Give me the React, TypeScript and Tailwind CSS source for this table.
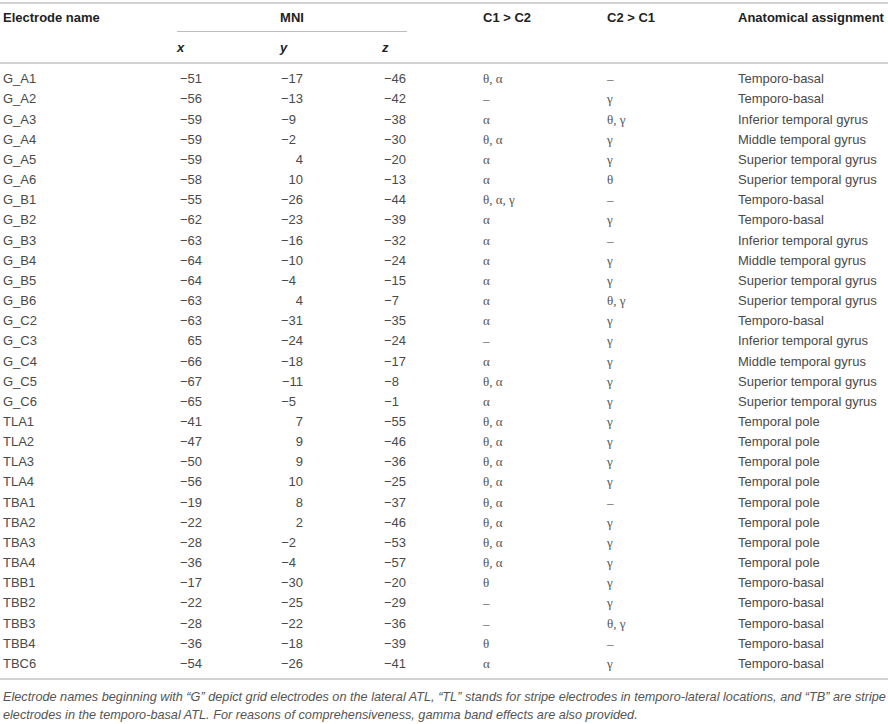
const rows: [string, number, number, number, string, string, string][] = [
  ['G_A1', -51, -17, -46, 'θ, α', '–', 'Temporo-basal'],
  ['G_A2', -56, -13, -42, '–', 'γ', 'Temporo-basal'],
  ['G_A3', -59, -9, -38, 'α', 'θ, γ', 'Inferior temporal gyrus'],
  ['G_A4', -59, -2, -30, 'θ, α', 'γ', 'Middle temporal gyrus'],
  ['G_A5', -59, 4, -20, 'α', 'γ', 'Superior temporal gyrus'],
  ['G_A6', -58, 10, -13, 'α', 'θ', 'Superior temporal gyrus'],
  ['G_B1', -55, -26, -44, 'θ, α, γ', '–', 'Temporo-basal'],
  ['G_B2', -62, -23, -39, 'α', 'γ', 'Temporo-basal'],
  ['G_B3', -63, -16, -32, 'α', '–', 'Inferior temporal gyrus'],
  ['G_B4', -64, -10, -24, 'α', 'γ', 'Middle temporal gyrus'],
  ['G_B5', -64, -4, -15, 'α', 'γ', 'Superior temporal gyrus'],
  ['G_B6', -63, 4, -7, 'α', 'θ, γ', 'Superior temporal gyrus'],
  ['G_C2', -63, -31, -35, 'α', 'γ', 'Temporo-basal'],
  ['G_C3', 65, -24, -24, '–', 'γ', 'Inferior temporal gyrus'],
  ['G_C4', -66, -18, -17, 'α', 'γ', 'Middle temporal gyrus'],
  ['G_C5', -67, -11, -8, 'θ, α', 'γ', 'Superior temporal gyrus'],
  ['G_C6', -65, -5, -1, 'α', 'γ', 'Superior temporal gyrus'],
  ['TLA1', -41, 7, -55, 'θ, α', 'γ', 'Temporal pole'],
  ['TLA2', -47, 9, -46, 'θ, α', 'γ', 'Temporal pole'],
  ['TLA3', -50, 9, -36, 'θ, α', 'γ', 'Temporal pole'],
  ['TLA4', -56, 10, -25, 'θ, α', 'γ', 'Temporal pole'],
  ['TBA1', -19, 8, -37, 'θ, α', '–', 'Temporal pole'],
  ['TBA2', -22, 2, -46, 'θ, α', 'γ', 'Temporal pole'],
  ['TBA3', -28, -2, -53, 'θ, α', 'γ', 'Temporal pole'],
  ['TBA4', -36, -4, -57, 'θ, α', 'γ', 'Temporal pole'],
  ['TBB1', -17, -30, -20, 'θ', 'γ', 'Temporo-basal'],
  ['TBB2', -22, -25, -29, '–', 'γ', 'Temporo-basal'],
  ['TBB3', -28, -22, -36, '–', 'θ, γ', 'Temporo-basal'],
  ['TBB4', -36, -18, -39, 'θ', '–', 'Temporo-basal'],
  ['TBC6', -54, -26, -41, 'α', 'γ', 'Temporo-basal'],
];

const cols = 'grid grid-cols-[174px_103px_102px_101px_124px_131px_1fr]';

function Num({ v, w }: { v: number; w: string }) {
  // single-digit negatives line up with the minus of two-digit ones
  const pad = v < 0 && v > -10 ? 'pr-[7px]' : '';
  return (
    <span className={`${w} ${pad} block text-right`}>
      {v < 0 ? `\u2212${-v}` : v}
    </span>
  );
}

function Greek({ s }: { s: string }) {
  return <span className="font-['Liberation_Serif',serif] text-[13px] text-[#555]">{s}</span>;
}

export default function App() {
  return (
    <div className="w-[888px] h-[724px] bg-white font-['Liberation_Sans',Arial,sans-serif] text-[13px] text-[#4a4a4a] overflow-hidden">
      <div className="mt-[2px] border-t-2 border-[#d2d2d2]" />

      <div className={`${cols} pl-[3px] font-bold text-[#222]`}>
        <div className="h-[28px] flex items-center">Electrode name</div>
        <div className="col-span-3 w-[230px] h-[28px] flex items-center justify-center border-b border-[#bdbdbd]">
          MNI
        </div>
        <div className="h-[28px] flex items-center">C1 &gt; C2</div>
        <div className="h-[28px] flex items-center">C2 &gt; C1</div>
        <div className="h-[28px] flex items-center">Anatomical assignment</div>

        <div className="h-[30px]" />
        <div className="h-[30px] pt-[2px] flex items-center italic">x</div>
        <div className="h-[30px] pt-[2px] flex items-center italic">y</div>
        <div className="h-[30px] pt-[2px] flex items-center italic">z</div>
        <div className="col-span-3 h-[30px]" />
      </div>

      <div className="border-t-2 border-[#d2d2d2] pt-[5px] pb-[4px]">
        {rows.map(([name, x, y, z, c1, c2, area]) => (
          <div key={name} className={`${cols} pl-[3px] h-[20.17px] items-center`}>
            <div>{name}</div>
            <div><Num v={x} w="w-[25px]" /></div>
            <div><Num v={y} w="w-[23px]" /></div>
            <div><Num v={z} w="w-[24px]" /></div>
            <div><Greek s={c1} /></div>
            <div><Greek s={c2} /></div>
            <div>{area}</div>
          </div>
        ))}
      </div>

      <div className="border-t-2 border-[#d2d2d2] pt-[8px] pl-[3px] text-[12.7px] leading-[18px] italic text-[#555] whitespace-nowrap">
        Electrode names beginning with “G” depict grid electrodes on the lateral ATL, “TL” stands for stripe electrodes in
        temporo-lateral locations, and “TB” are stripe
        <br />
        electrodes in the temporo-basal ATL. For reasons of comprehensiveness, gamma band effects are also provided.
      </div>
    </div>
  );
}
